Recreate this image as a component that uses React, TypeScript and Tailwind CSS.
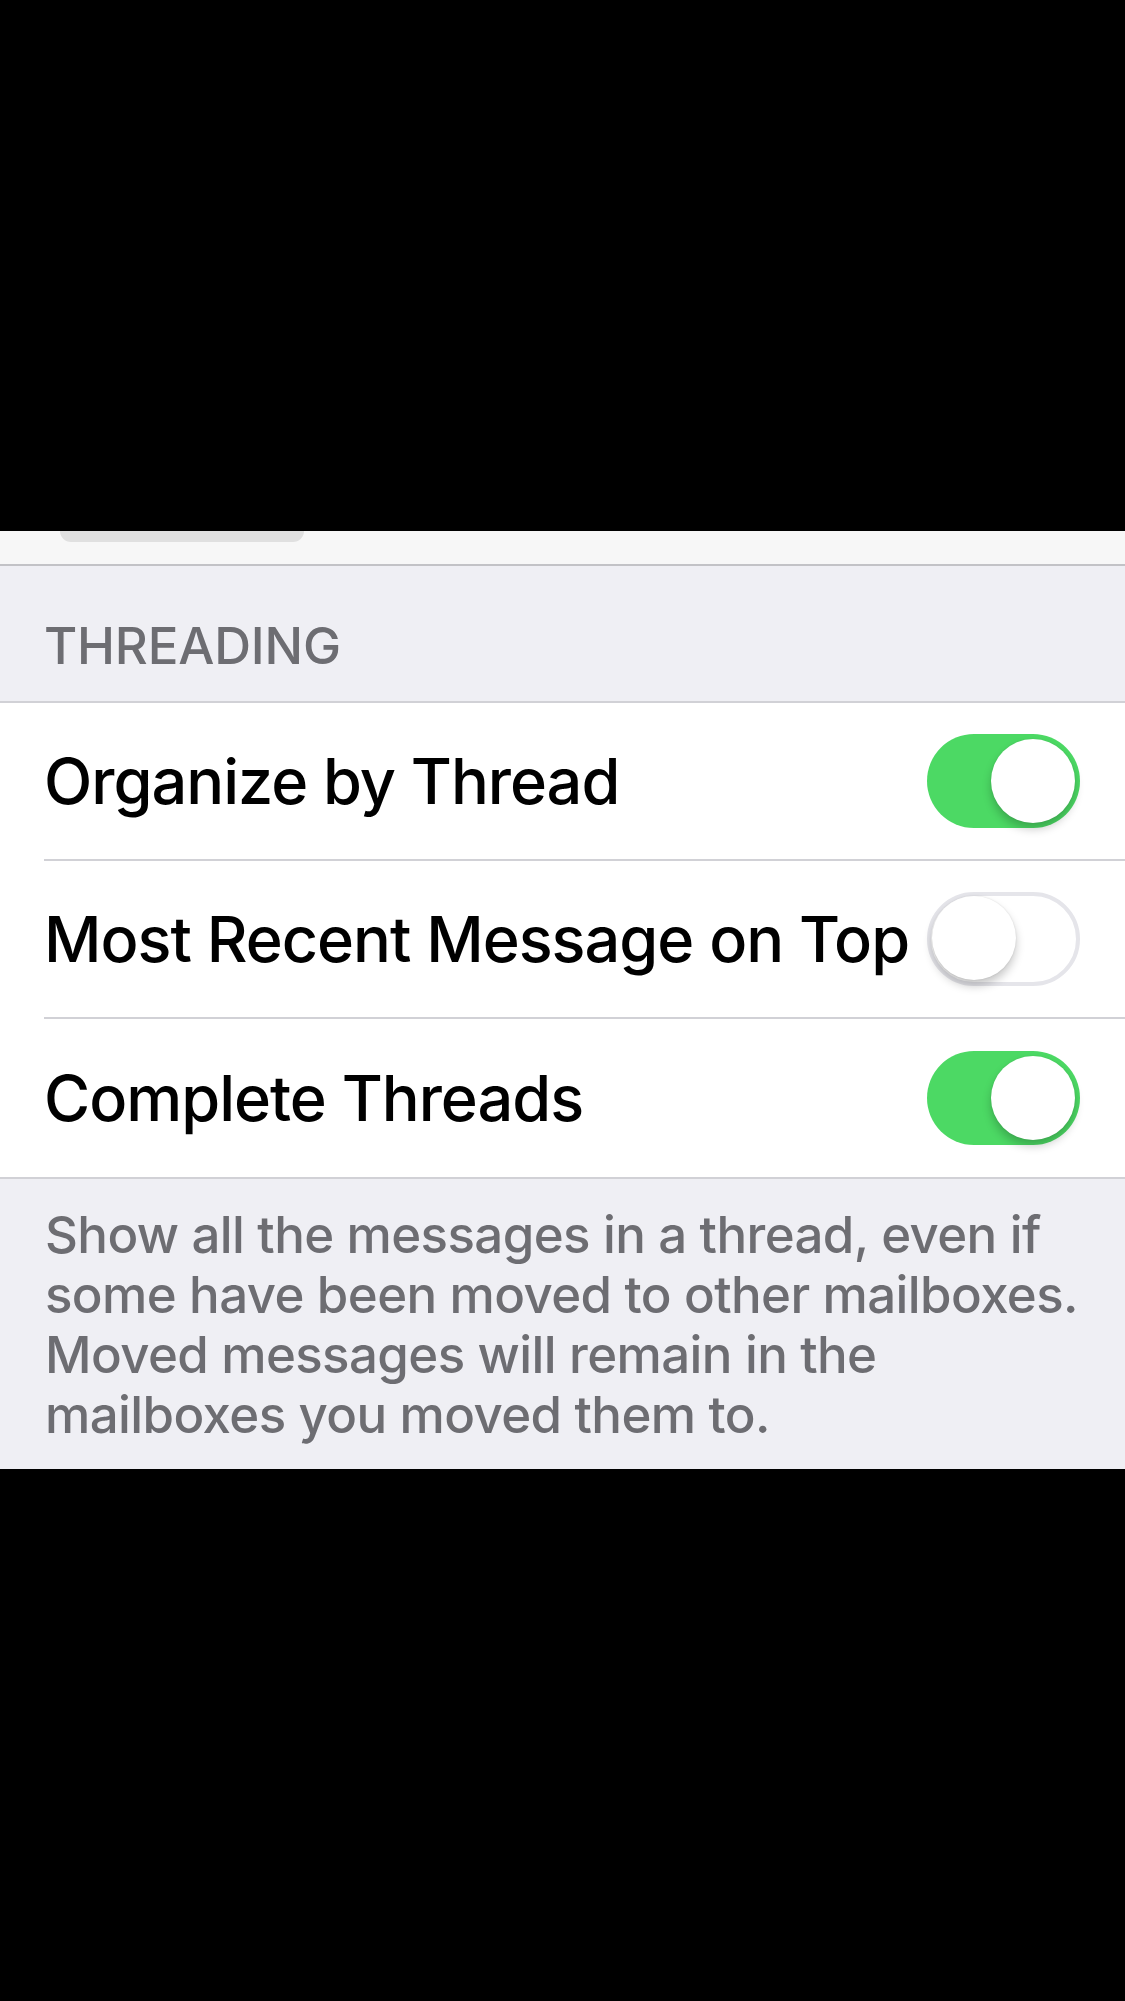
import { useState } from "react";

type Row = { label: string; on: boolean };

const initialRows: Row[] = [
  { label: "Organize by Thread", on: true },
  { label: "Most Recent Message on Top", on: false },
  { label: "Complete Threads", on: true },
];

function Toggle({ on, onClick }: { on: boolean; onClick: () => void }) {
  return (
    <button
      onClick={onClick}
      className={
        on
          ? "relative h-[94px] w-[153px] shrink-0 rounded-full bg-[#4cd964]"
          : "relative h-[94px] w-[153px] shrink-0 rounded-full border-[4px] border-[#e5e5ea] bg-white"
      }
    >
      <span
        className={
          on
            ? "absolute right-[5px] top-[5px] h-[84px] w-[84px] rounded-full bg-white shadow-[0_6px_10px_rgba(0,0,0,0.22),0_0_2px_rgba(0,0,0,0.08)]"
            : "absolute left-[1px] top-[0px] h-[84px] w-[84px] rounded-full bg-white shadow-[0_6px_10px_rgba(0,0,0,0.22),0_0_2px_rgba(0,0,0,0.12)]"
        }
      />
    </button>
  );
}

export default function App() {
  const [rows, setRows] = useState(initialRows);

  const flip = (i: number) =>
    setRows((r) => r.map((row, j) => (j === i ? { ...row, on: !row.on } : row)));

  return (
    <div className="flex min-h-[2001px] w-[1125px] flex-col bg-black font-['Inter','Liberation_Sans',sans-serif]">
      <div className="h-[531px] bg-black" />

      {/* bottom of the previous panel */}
      <div className="h-[35px] border-b-2 border-[#c2c2c6] bg-[#f7f7f7] pl-[60px]">
        <div className="h-[11px] w-[244px] rounded-b-[14px] bg-[#e0e0e0]" />
      </div>

      <div className="flex h-[137px] items-end border-b-2 border-[#d1d1d6] bg-[#efeff4] px-[44px] pb-[25px]">
        <span className="text-[51px] font-medium leading-[60px] tracking-[-0.2px] text-[#6d6d72]">THREADING</span>
      </div>

      <div className="bg-white">
        {rows.map((row, i) => (
          <div key={row.label} className="pl-[44px]">
            <div
              className={
                i < rows.length - 1
                  ? "flex h-[158px] items-center justify-between border-b-2 border-[#d1d1d6] pr-[45px]"
                  : "flex h-[158px] items-center justify-between pr-[45px]"
              }
            >
              <span className="text-[63px] font-medium leading-none tracking-[-1px] text-black">{row.label}</span>
              <Toggle on={row.on} onClick={() => flip(i)} />
            </div>
          </div>
        ))}
      </div>

      <div className="border-t-2 border-[#d1d1d6] bg-[#efeff4] pb-[24px] pl-[45px] pr-[36px] pt-[26px]">
        <p className="text-[51px] font-medium leading-[60px] tracking-[-0.6px] text-[#6d6d72]">
          Show all the messages in a thread, even if some have been moved to other mailboxes. Moved messages will
          remain in the mailboxes you moved them to.
        </p>
      </div>

      <div className="flex-1 bg-black" />
    </div>
  );
}
